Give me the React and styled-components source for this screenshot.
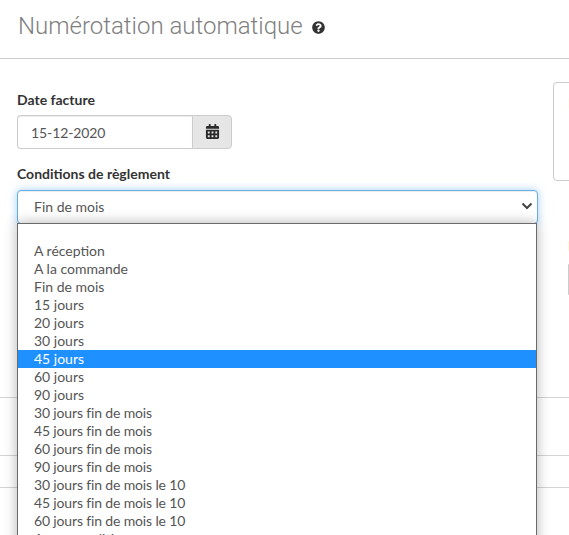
import React from "react";
import styled, { createGlobalStyle } from "styled-components";
import { FaCalendarAlt, FaQuestionCircle } from "react-icons/fa";

const Global = createGlobalStyle`
  html, body { margin: 0; padding: 0; background: #fff; }
  body {
    font-family: "Lato", "Liberation Sans", sans-serif;
    font-size: 14px;
    color: #555;
    text-rendering: optimizeLegibility;
    font-variant-ligatures: common-ligatures;
  }
  #root { width: 569px; height: 535px; overflow: hidden; }
`;

const Page = styled.div`
  width: 569px;
  height: 535px;
  overflow: hidden;
`;

const Header = styled.header`
  height: 58px;
  box-sizing: content-box;
  border-bottom: 1px solid #ccc;
  padding-left: 18px;
  display: flex;
  align-items: center;
  gap: 9px;
`;

const Title = styled.h1`
  margin: -7px 0 0;
  font-family: "Roboto", "Liberation Sans", sans-serif;
  font-weight: 300;
  font-size: 24px;
  line-height: 30px;
  color: #808080;
`;

const HelpIcon = styled(FaQuestionCircle)`
  width: 13px;
  height: 13px;
  color: #333;
  margin-top: -3px;
`;

const Columns = styled.div`
  display: flex;
  padding-left: 17px;
  gap: 16px;
  height: 338px;
`;

const Main = styled.div`
  flex: none;
  width: 520px;
  padding-top: 31px;
`;

const Side = styled.aside`
  flex: none;
  width: 300px;
  padding-top: 23px;
`;

const InfoBox = styled.div`
  box-sizing: border-box;
  height: 99px;
  border: 1px solid #ccc;
  border-radius: 4px;
  padding: 10px 14px;
  color: #ffe9a8;
  font-size: 14px;
  line-height: 20px;
`;

const SideLabel = styled.div`
  margin: 58px 0 0 15px;
  height: 14px;
  color: #f6c98a;
  font-weight: 700;
  font-size: 14px;
  line-height: 14px;
`;

const SideInput = styled.div`
  margin: 11px 0 0 15px;
  height: 31px;
  box-sizing: border-box;
  border: 1px solid #ccc;
  border-radius: 0 4px 4px 0;
`;

const Label = styled.label`
  display: block;
  font-weight: 700;
  font-size: 14px;
  line-height: 20px;
  color: #333;
`;

const DateGroup = styled.div`
  display: flex;
  width: 215px;
  height: 34px;
  margin: 5px 0 15px;
`;

const DateInput = styled.div`
  box-sizing: border-box;
  flex: 1;
  border: 1px solid #ccc;
  border-right: 0;
  border-radius: 4px 0 0 4px;
  padding-left: 13px;
  line-height: 33px;
  letter-spacing: -0.1px;
  color: #555;
  box-shadow: inset 0 1px 1px rgba(0, 0, 0, 0.075);
`;

const CalendarButton = styled.div`
  box-sizing: border-box;
  width: 40px;
  padding-bottom: 2px;
  border: 1px solid #ccc;
  border-radius: 0 4px 4px 0;
  background: #e6e6e6;
  display: flex;
  align-items: center;
  justify-content: center;
  color: #2b2b2b;
  font-size: 15px;
`;

const SelectWrap = styled.div`
  position: relative;
  margin-top: 6px;
`;

const SelectBox = styled.div`
  box-sizing: border-box;
  width: 521px;
  height: 34px;
  border: 1px solid #66afe9;
  border-radius: 4px;
  padding: 0 4px 2px 16px;
  display: flex;
  align-items: center;
  justify-content: space-between;
  color: #555;
  background: #fff;
  box-shadow: inset 0 1px 1px rgba(0, 0, 0, 0.075), 0 0 8px rgba(102, 175, 233, 0.6);
`;

const Chevron = styled.svg`
  width: 12px;
  height: 8px;
`;

const Dropdown = styled.ul`
  position: absolute;
  z-index: 5;
  top: 33px;
  left: 0;
  width: 520px;
  box-sizing: border-box;
  margin: 0;
  padding: 0;
  list-style: none;
  background: #fff;
  border: 1px solid #6a6a6a;
  box-shadow: 0 0 12px rgba(0, 0, 0, 0.3);
`;

const Option = styled.li`
  height: 18px;
  line-height: 18px;
  padding-left: 16px;
  white-space: pre;
  letter-spacing: ${(p) => (p.$tight ? "-0.15px" : "0")};
  color: ${(p) => (p.$active ? "#fff" : "#555")};
  background: ${(p) => (p.$active ? "#1e90ff" : "transparent")};
`;

const HiddenLabel = styled.div`
  margin-top: 18px;
  height: 20px;
`;

const HiddenInput = styled.div`
  margin-top: 4px;
  height: 30px;
  box-sizing: border-box;
  border: 1px solid #ccc;
  border-radius: 4px;
`;

const Row = styled.div`
  height: ${(p) => p.$h}px;
  border-top: 1px solid #d4d4d4;
  box-sizing: border-box;
`;

const options = [
  " ",
  "A réception",
  "A la commande",
  "Fin de mois",
  "15 jours",
  "20 jours",
  "30 jours",
  "45 jours",
  "60 jours",
  "90 jours",
  "30 jours fin de mois",
  "45 jours fin de mois",
  "60 jours fin de mois",
  "90 jours fin de mois",
  "30 jours fin de mois le 10",
  "45 jours fin de mois le 10",
  "60 jours fin de mois le 10",
  "Autre condition",
];

export default function App() {
  return (
    <Page>
      <Global />
      <Header>
        <Title>Numérotation automatique</Title>
        <HelpIcon />
      </Header>
      <Columns>
        <Main>
          <Label>Date facture</Label>
          <DateGroup>
            <DateInput>15-12-2020</DateInput>
            <CalendarButton>
              <FaCalendarAlt />
            </CalendarButton>
          </DateGroup>
          <Label>Conditions de règlement</Label>
          <SelectWrap>
            <SelectBox>
              Fin de mois
              <Chevron viewBox="0 0 12 8">
                <path d="M1.5 1.5 L6 6 L10.5 1.5" fill="none" stroke="#444" strokeWidth="2" />
              </Chevron>
            </SelectBox>
            <Dropdown>
              {options.map((o) => (
                <Option key={o} $active={o === "45 jours"} $tight={o.includes("fin de")}>
                  {o}
                </Option>
              ))}
            </Dropdown>
          </SelectWrap>
          <HiddenLabel />
          <HiddenInput />
        </Main>
        <Side>
          <InfoBox>Information</InfoBox>
          <SideLabel>Remise</SideLabel>
          <SideInput />
        </Side>
      </Columns>
      <Row $h={58} />
      <Row $h={32} />
      <Row $h={48} />
    </Page>
  );
}
